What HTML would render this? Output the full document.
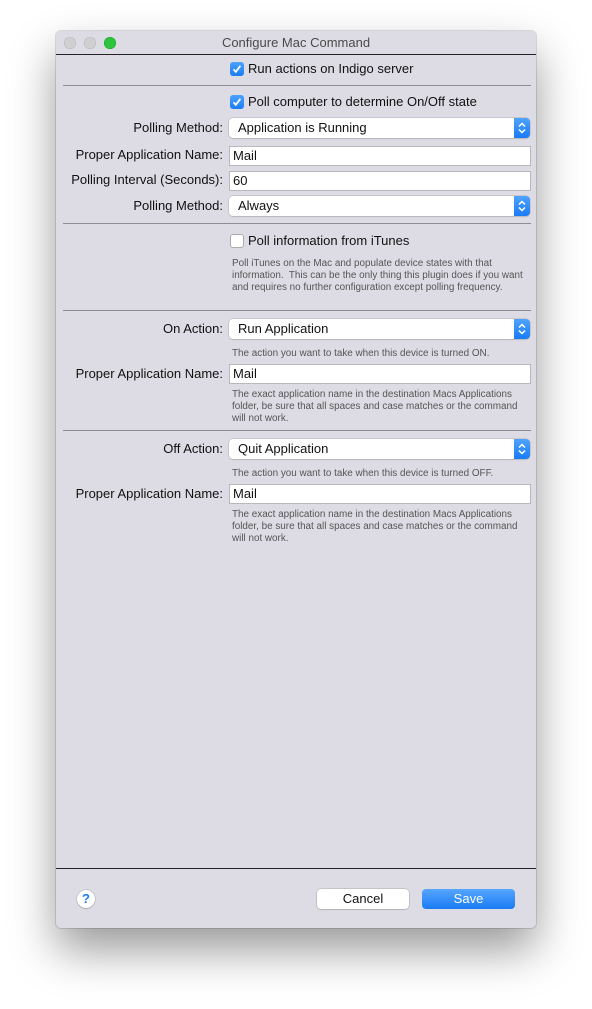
<!DOCTYPE html>
<html><head><style>
body{margin:0;width:592px;height:1009px;background:#fff;font-family:"Liberation Sans",sans-serif;position:relative;overflow:hidden}
.win{position:absolute;left:56px;top:31px;width:480px;height:897px;background:#dddce4;border-radius:5px;box-shadow:0 22px 45px rgba(0,0,0,.4),0 0 0 1px rgba(0,0,0,.12)}
.a{position:absolute}
.t{position:absolute;font-size:13px;color:#111;line-height:16px;white-space:nowrap}
.lbl{position:absolute;font-size:13px;color:#111;line-height:16px;right:369px;text-align:right;white-space:nowrap}
.sep{position:absolute;left:63px;width:468px;height:1px;background:#8e8e92}
.pop{position:absolute;left:229px;width:301px;height:20px;background:#fff;border-radius:4px;box-shadow:0 0 0 .5px #b0b0b4,0 1px 1px rgba(0,0,0,.15);font-size:13px;line-height:20px;color:#111}
.pop span{position:absolute;left:9px;top:0}
.pop b{position:absolute;right:0;top:0;width:16px;height:20px;background:linear-gradient(#4fa3ff,#1a7bf5);border-radius:0 4px 4px 0}
.pop b svg{position:absolute;left:0;top:0}
.fld{position:absolute;left:229px;width:300px;height:18px;background:#fff;border:1px solid #b8b8bc;font-size:13px;line-height:18px;text-indent:3px;color:#111}
.cb{position:absolute;left:230px;width:14px;height:14px;border-radius:3px}
.on{background:linear-gradient(#4ca2ff,#1b7cf4)}
.off{background:#fff;box-shadow:inset 0 0 0 1px #aaa}
.sm{position:absolute;left:232px;font-size:9.9px;line-height:12px;color:#555;white-space:nowrap}
</style></head><body>
<div class="win"></div>
<div class="a" style="left:56px;top:54px;width:480px;height:1px;background:#222"></div>
<div class="a" style="left:64px;top:37px;width:12px;height:12px;border-radius:50%;background:#d0d0d3;box-shadow:inset 0 0 0 .5px #b5b5b8"></div>
<div class="a" style="left:84px;top:37px;width:12px;height:12px;border-radius:50%;background:#d0d0d3;box-shadow:inset 0 0 0 .5px #b5b5b8"></div>
<div class="a" style="left:104px;top:37px;width:12px;height:12px;border-radius:50%;background:#2ec43d;box-shadow:inset 0 0 0 .5px #1ea02c"></div>
<div class="t" style="left:0;width:592px;text-align:center;top:35px;color:#4a4a4a">Configure Mac Command</div>

<svg width="0" height="0" style="position:absolute"><defs><symbol id="ck" viewBox="0 0 14 14"><path d="M3.5 7.3l2.3 2.5 4.6-6" fill="none" stroke="#fff" stroke-width="1.8"/></symbol><symbol id="ar" viewBox="0 0 16 20"><path d="M5 8.5l3-3 3 3M5 11.5l3 3 3-3" fill="none" stroke="#fff" stroke-width="1.5"/></symbol></defs></svg>

<div class="cb on" style="top:62px"><svg width="14" height="14"><use href="#ck"/></svg></div>
<div class="t" style="left:248px;top:61px">Run actions on Indigo server</div>
<div class="sep" style="top:85px"></div>
<div class="cb on" style="top:95px"><svg width="14" height="14"><use href="#ck"/></svg></div>
<div class="t" style="left:248px;top:94px">Poll computer to determine On/Off state</div>

<div class="lbl" style="top:120px">Polling Method:</div>
<div class="pop" style="top:118px"><span>Application is Running</span><b><svg width="16" height="20"><use href="#ar"/></svg></b></div>
<div class="lbl" style="top:147px">Proper Application Name:</div>
<div class="fld" style="top:146px">Mail</div>
<div class="lbl" style="top:172px">Polling Interval (Seconds):</div>
<div class="fld" style="top:171px">60</div>
<div class="lbl" style="top:198px">Polling Method:</div>
<div class="pop" style="top:196px"><span>Always</span><b><svg width="16" height="20"><use href="#ar"/></svg></b></div>
<div class="sep" style="top:223px"></div>

<div class="cb off" style="top:234px"></div>
<div class="t" style="left:248px;top:233px">Poll information from iTunes</div>
<div class="sm" style="top:258px">Poll iTunes on the Mac and populate device states with that<br>information.&nbsp; This can be the only thing this plugin does if you want<br>and requires no further configuration except polling frequency.</div>
<div class="sep" style="top:310px"></div>

<div class="lbl" style="top:321px">On Action:</div>
<div class="pop" style="top:319px"><span>Run Application</span><b><svg width="16" height="20"><use href="#ar"/></svg></b></div>
<div class="sm" style="top:348px">The action you want to take when this device is turned ON.</div>
<div class="lbl" style="top:366px">Proper Application Name:</div>
<div class="fld" style="top:364px">Mail</div>
<div class="sm" style="top:389px">The exact application name in the destination Macs Applications<br>folder, be sure that all spaces and case matches or the command<br>will not work.</div>
<div class="sep" style="top:430px"></div>

<div class="lbl" style="top:441px">Off Action:</div>
<div class="pop" style="top:439px"><span>Quit Application</span><b><svg width="16" height="20"><use href="#ar"/></svg></b></div>
<div class="sm" style="top:468px">The action you want to take when this device is turned OFF.</div>
<div class="lbl" style="top:486px">Proper Application Name:</div>
<div class="fld" style="top:484px">Mail</div>
<div class="sm" style="top:509px">The exact application name in the destination Macs Applications<br>folder, be sure that all spaces and case matches or the command<br>will not work.</div>

<div class="a" style="left:56px;top:868px;width:480px;height:1px;background:#222"></div>
<div class="a" style="left:77px;top:890px;width:18px;height:18px;border-radius:50%;background:#fff;box-shadow:0 0 0 .5px #aaa,0 1px 1px rgba(0,0,0,.2);color:#1a7cf5;font-size:13px;line-height:18px;text-align:center;font-weight:bold">?</div>
<div class="a" style="left:317px;top:889px;width:92px;height:20px;background:#fff;border-radius:4px;box-shadow:0 0 0 .5px #aaa,0 1px 1px rgba(0,0,0,.15);font-size:13px;line-height:20px;text-align:center;color:#111">Cancel</div>
<div class="a" style="left:422px;top:889px;width:93px;height:20px;background:linear-gradient(#55a6ff,#1a7bf5);border-radius:4px;font-size:13px;line-height:20px;text-align:center;color:#fff">Save</div>
</body></html>
